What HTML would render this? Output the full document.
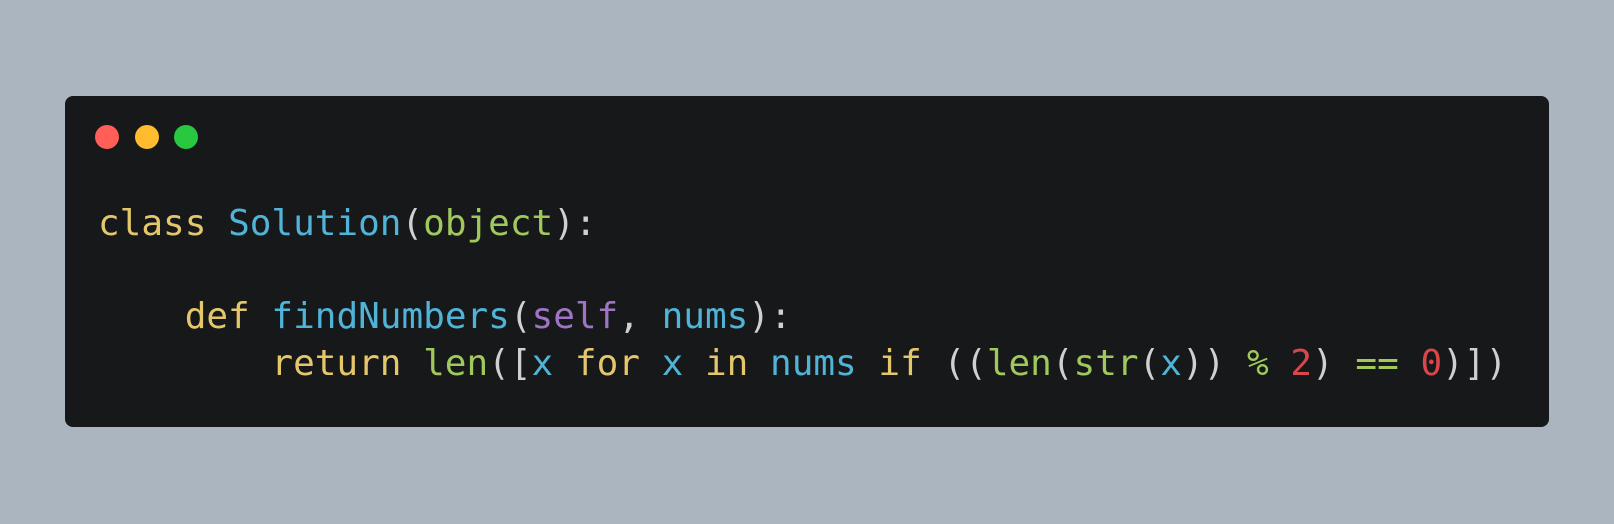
<!DOCTYPE html>
<html><head><style>
html,body{margin:0;padding:0;}
body{width:1614px;height:524px;background:#abb5c0;position:relative;overflow:hidden;}
.card{position:absolute;left:65px;top:96px;width:1484px;height:331px;background:#17181a;border-radius:8px;}
.dot{position:absolute;top:125px;width:24px;height:24px;border-radius:50%;}
pre{position:absolute;left:98px;top:201px;margin:0;font-family:"DejaVu Sans Mono","Liberation Mono",monospace;font-size:36px;line-height:46.5px;color:#d0d0d0;}
.k{color:#e5c76b}.b{color:#4fb4d8}.g{color:#a0c95c}.p{color:#a074c4}.r{color:#d9464b}
</style></head><body>
<div class="card"></div>
<div class="dot" style="left:95px;background:#ff5f57"></div>
<div class="dot" style="left:135px;background:#febc2e"></div>
<div class="dot" style="left:174px;background:#28c840"></div>
<pre><span class="k">class</span> <span class="b">Solution</span>(<span class="g">object</span>):

    <span class="k">def</span> <span class="b">findNumbers</span>(<span class="p">self</span>, <span class="b">nums</span>):
        <span class="k">return</span> <span class="g">len</span>([<span class="b">x</span> <span class="k">for</span> <span class="b">x</span> <span class="k">in</span> <span class="b">nums</span> <span class="k">if</span> ((<span class="g">len</span>(<span class="g">str</span>(<span class="b">x</span>)) <span class="g">%</span> <span class="r">2</span>) <span class="g">==</span> <span class="r">0</span>)])</pre>
</body></html>
